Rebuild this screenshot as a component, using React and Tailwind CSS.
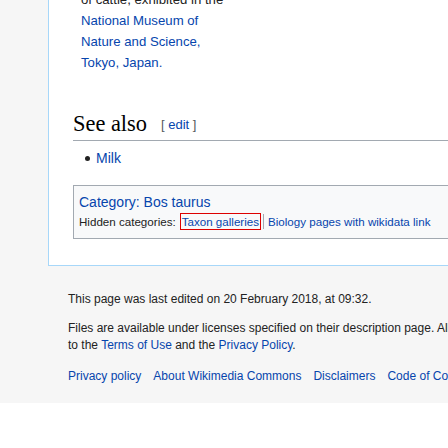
export default function App() {
  return (
    <div className="w-[448px] h-[448px] overflow-hidden bg-white font-['Liberation_Sans',Arial,sans-serif] text-[#222]">
      <div className="bg-[#f6f6f6] pl-[48px]">
        <div className="border-l border-b border-[#a7d7f9] bg-white pl-[24px] h-[266px] overflow-hidden">
          <div className="pl-[8px] -mt-[11px] text-[13.2px] leading-[21px]">
            <div className="text-[#222] whitespace-nowrap">of cattle, exhibited in the</div>
            <div className="text-[#0645ad]">National Museum of</div>
            <div className="text-[#0645ad]">Nature and Science,</div>
            <div className="text-[#0645ad]">Tokyo, Japan.</div>
          </div>

          <div className="mt-[35px] flex items-end border-b border-[#a2a9b1] h-[33px] pb-[2px]">
            <h2 className="font-['Liberation_Serif',Georgia,serif] text-[22.4px] leading-[28px] text-black">See also</h2>
            <span className="ml-[14px] mb-[4px] text-[13px] leading-[18px] text-[#54595d]">
              [ <span className="text-[#0645ad]">edit</span> ]
            </span>
          </div>

          <ul className="mt-[7px] pl-[12px] text-[14px] leading-[20px]">
            <li className="flex items-center">
              <span className="w-[5px] h-[5px] rounded-full bg-[#222] mr-[6px]"></span>
              <span className="text-[#0645ad]">Milk</span>
            </li>
          </ul>

          <div className="mt-[17px] -mr-[20px] border border-[#a2a9b1] bg-[#f8f9fa] h-[54px] pl-[5px] pt-[6px] whitespace-nowrap">
            <div className="text-[14px] leading-[20px] text-[#0645ad]">Category: Bos taurus</div>
            <div className="mt-[1px] flex items-center text-[11.6px] leading-[15px]">
              <span className="text-[#222]">Hidden categories:</span>
              <span className="ml-[4px] border border-[#dd0000] px-[1px] text-[#0645ad]">Taxon galleries</span>
              <span className="mx-[2px] w-px h-[15px] bg-[#a2a9b1]"></span>
              <span className="ml-[2px] text-[#0645ad]">Biology pages with wikidata link</span>
            </div>
          </div>
        </div>
      </div>

      <div className="bg-[#f6f6f6] h-[137px] pl-[68px] pt-[25px] text-[12px] leading-[16.8px] whitespace-nowrap overflow-hidden">
        <p>This page was last edited on 20 February 2018, at 09:32.</p>
        <p className="mt-[12px]">
          Files are available under licenses specified on their description page. All structured data
        </p>
        <p>
          to the <span className="text-[#0645ad]">Terms of Use</span> and the{" "}
          <span className="text-[#0645ad]">Privacy Policy</span>.
        </p>
        <div className="mt-[15px] flex gap-[12px] text-[#0645ad]">
          <span>Privacy policy</span>
          <span>About Wikimedia Commons</span>
          <span>Disclaimers</span>
          <span>Code of Conduct</span>
        </div>
      </div>
    </div>
  );
}
